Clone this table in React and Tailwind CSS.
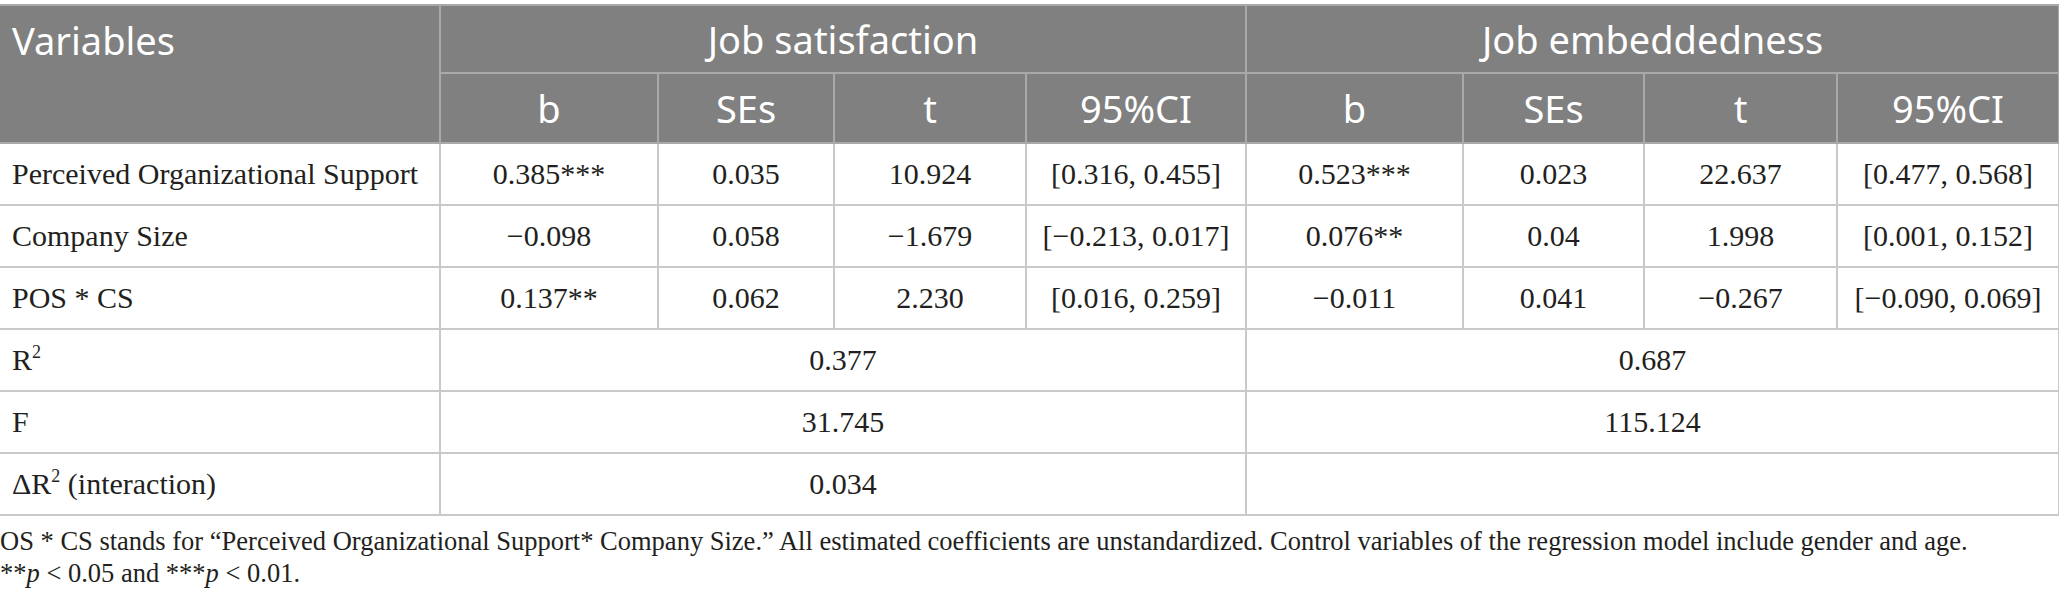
import React from 'react';

const widths = [440, 218, 176, 192, 220, 217, 181, 193, 222];

const rows = [
  ['Perceived Organizational Support', '0.385***', '0.035', '10.924', '[0.316, 0.455]', '0.523***', '0.023', '22.637', '[0.477, 0.568]'],
  ['Company Size', '−0.098', '0.058', '−1.679', '[−0.213, 0.017]', '0.076**', '0.04', '1.998', '[0.001, 0.152]'],
  ['POS * CS', '0.137**', '0.062', '2.230', '[0.016, 0.259]', '−0.011', '0.041', '−0.267', '[−0.090, 0.069]'],
];

const head = "font-['Noto_Sans',sans-serif] font-normal text-white text-[38px] leading-none";
const cell = 'border-2 border-[#c9c9c9] text-center align-middle';
const hcell = 'border-2 border-[#a9a9a9] text-center align-middle';

export default function App() {
  return (
    <div className="w-[2059px] h-[604px] bg-white overflow-hidden pt-[4px]">
      <table className="table-fixed border-collapse w-[2059px] text-[30px] leading-none text-[#231f20] font-['Liberation_Serif',serif]">
        <colgroup>
          {widths.map((w, i) => (
            <col key={i} style={{ width: w }} />
          ))}
        </colgroup>
        <thead className="bg-[#808080]">
          <tr className="h-[68px]">
            <th rowSpan={2} className={`${head} border-2 border-l-0 border-[#a9a9a9] text-left align-top pl-[12px] pt-[15px]`}>
              Variables
            </th>
            <th colSpan={4} className={`${hcell} ${head}`}>Job satisfaction</th>
            <th colSpan={4} className={`${hcell} ${head}`}>Job embeddedness</th>
          </tr>
          <tr className="h-[70px]">
            {['b', 'SEs', 't', '95%CI', 'b', 'SEs', 't', '95%CI'].map((h, i) => (
              <th key={i} className={`${hcell} ${head}`}>{h}</th>
            ))}
          </tr>
        </thead>
        <tbody>
          {rows.map((r) => (
            <tr key={r[0]} className="h-[62px]">
              <td className={`${cell} border-l-0 text-left pl-[12px]`}>{r[0]}</td>
              {r.slice(1).map((v, i) => (
                <td key={i} className={cell}>{v}</td>
              ))}
            </tr>
          ))}
          <tr className="h-[62px]">
            <td className={`${cell} border-l-0 text-left pl-[12px]`}>
              R<sup className="text-[18px] relative -top-[12px]">2</sup>
            </td>
            <td colSpan={4} className={cell}>0.377</td>
            <td colSpan={4} className={cell}>0.687</td>
          </tr>
          <tr className="h-[62px]">
            <td className={`${cell} border-l-0 text-left pl-[12px]`}>F</td>
            <td colSpan={4} className={cell}>31.745</td>
            <td colSpan={4} className={cell}>115.124</td>
          </tr>
          <tr className="h-[62px]">
            <td className={`${cell} border-l-0 text-left pl-[12px]`}>
              ΔR<sup className="text-[18px] relative -top-[12px]">2</sup> (interaction)
            </td>
            <td colSpan={4} className={cell}>0.034</td>
            <td colSpan={4} className={cell}></td>
          </tr>
        </tbody>
      </table>
      <div className="pt-[9px] font-['Liberation_Serif',serif] text-[26.5px] leading-[32px] text-[#231f20]">
        <p>
          OS * CS stands for “Perceived Organizational Support* Company Size.” All estimated coefficients are unstandardized. Control variables of the regression model include gender and age.
        </p>
        <p>
          **<i>p</i> &lt; 0.05 and ***<i>p</i> &lt; 0.01.
        </p>
      </div>
    </div>
  );
}
